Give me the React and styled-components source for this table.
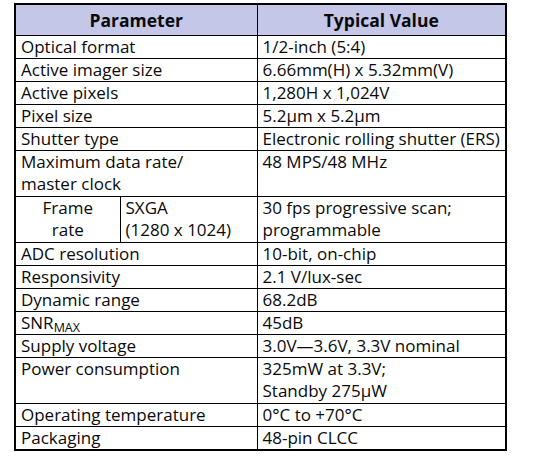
import React from "react";
import styled, { createGlobalStyle } from "styled-components";

const GlobalStyle = createGlobalStyle`
  body {
    margin: 0;
    background: #fff;
    font-family: "Open Sans", "Noto Sans", sans-serif;
    color: #0a0a0a;
  }
`;

const rows = [
  ["Optical format", "1/2-inch (5:4)"],
  ["Active imager size", "6.66mm(H) x 5.32mm(V)"],
  ["Active pixels", "1,280H x 1,024V"],
  ["Pixel size", "5.2µm x 5.2µm"],
  ["Shutter type", "Electronic rolling shutter (ERS)"],
  [["Maximum data rate/", "master clock"], ["48 MPS/48 MHz"]],
  "frame",
  ["ADC resolution", "10-bit, on-chip"],
  ["Responsivity", "2.1 V/lux-sec"],
  ["Dynamic range", "68.2dB"],
  ["snr", "45dB"],
  ["Supply voltage", "3.0V\u20143.6V, 3.3V nominal"],
  [["Power consumption"], ["325mW at 3.3V;", "Standby 275µW"]],
  ["Operating temperature", "0°C to +70°C"],
  ["Packaging", "48-pin CLCC"],
];

const Lines = ({ items }) =>
  items.map((t, i) => (
    <React.Fragment key={i}>
      {i > 0 && <br />}
      {t}
    </React.Fragment>
  ));

const App = () => {
  return (
    <Page>
      <GlobalStyle />
      <SpecTable>
        <colgroup>
          <col style={{ width: 105 }} />
          <col style={{ width: 137 }} />
          <col style={{ width: 249 }} />
        </colgroup>
        <thead>
          <tr>
            <HeadCell colSpan={2}>Parameter</HeadCell>
            <HeadCell>Typical Value</HeadCell>
          </tr>
        </thead>
        <tbody>
          {rows.map((r, i) => {
            if (r === "frame") {
              return (
                <tr key={i}>
                  <Cell $center $tall>
                    Frame
                    <br />
                    rate
                  </Cell>
                  <Cell $tall>
                    SXGA
                    <br />
                    (1280 x 1024)
                  </Cell>
                  <Cell $tall>
                    30 fps progressive scan;
                    <br />
                    programmable
                  </Cell>
                </tr>
              );
            }
            const [label, value] = r;
            const labelLines = Array.isArray(label) ? label : [label];
            const valueLines = Array.isArray(value) ? value : [value];
            const tall = labelLines.length > 1 || valueLines.length > 1;
            return (
              <tr key={i}>
                <Cell colSpan={2} $tall={tall}>
                  {label === "snr" ? (
                    <>
                      SNR<Sub>MAX</Sub>
                    </>
                  ) : (
                    <Lines items={labelLines} />
                  )}
                </Cell>
                <Cell $tall={tall}>
                  <Lines items={valueLines} />
                </Cell>
              </tr>
            );
          })}
        </tbody>
      </SpecTable>
    </Page>
  );
};

const Page = styled.div`
  padding: 3px 0 0 14px;
`;

const SpecTable = styled.table`
  border-collapse: collapse;
  table-layout: fixed;
  width: 491px;
  border: 2px solid #000;
  font-size: 17px;
`;

const HeadCell = styled.th`
  background: #c4c7e7;
  border: 1px solid #000;
  height: 31px;
  padding: 0 5px;
  font-weight: 700;
  font-size: 17.5px;
  text-align: center;
  vertical-align: middle;
  box-sizing: border-box;
`;

const Cell = styled.td`
  border: 1px solid #000;
  padding: 0 5px;
  height: ${(p) => (p.$tall ? 46 : 23)}px;
  line-height: 22px;
  vertical-align: top;
  text-align: ${(p) => (p.$center ? "center" : "left")};
  white-space: nowrap;
  box-sizing: border-box;
`;

const Sub = styled.sub`
  font-size: 12.5px;
  vertical-align: -3px;
  line-height: 0;
`;

export default App;
